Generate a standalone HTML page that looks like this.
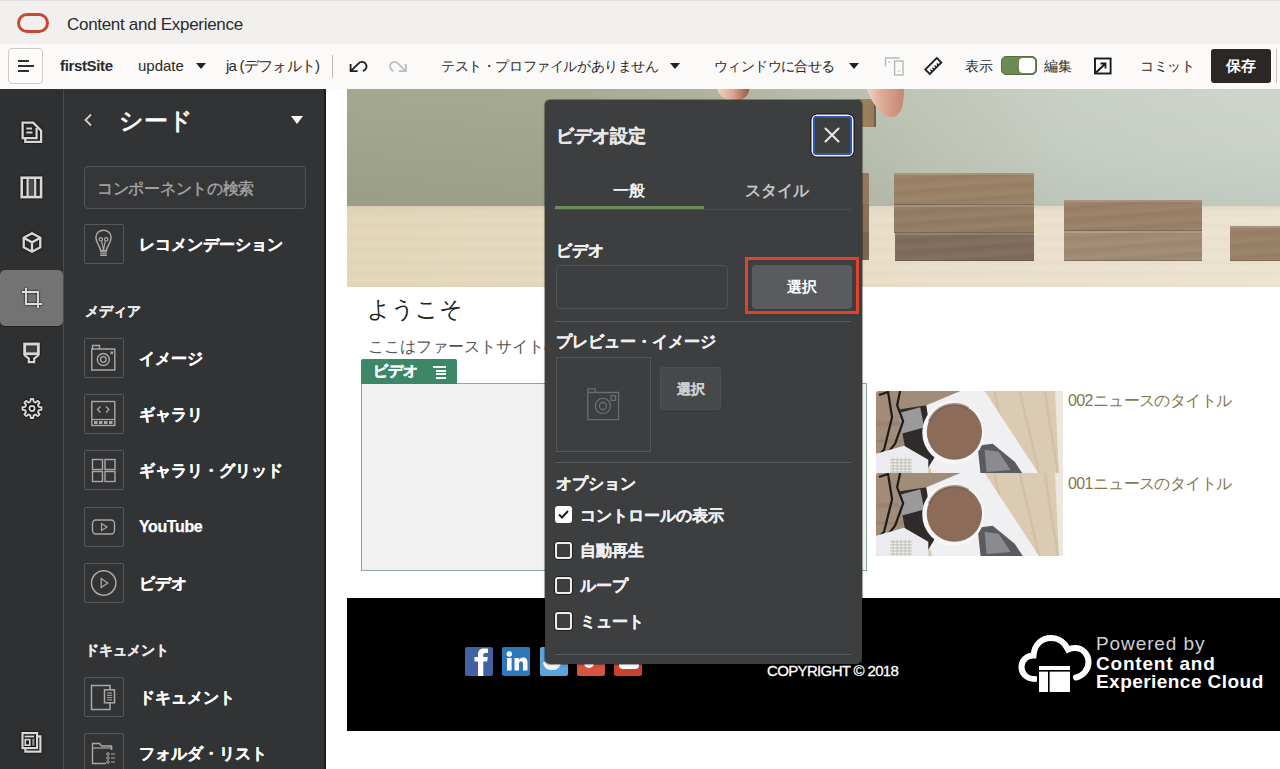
<!DOCTYPE html>
<html><head><meta charset="utf-8">
<style>
*{box-sizing:border-box;margin:0;padding:0}
html,body{width:1280px;height:769px;overflow:hidden;background:#fff}
body{position:relative;font-family:"Liberation Sans",sans-serif;color:#222}
.a{position:absolute}
#topbar{left:0;top:0;width:1280px;height:44px;background:#f1f0ee;border-top:1px solid #e2e1df}
#toolbar{left:0;top:44px;width:1280px;height:45px;background:#fbfaf9}
#rail{left:0;top:89px;width:63px;height:680px;background:#2f3032}
#railsep{left:63px;top:89px;width:1px;height:680px;background:#4a4b4d}
.a.ri{filter:drop-shadow(0 0 0.8px #000)}
#side{left:64px;top:89px;width:262px;height:680px;background:#323335;border-right:2px solid #1c1d1e}
#canvas{left:326px;top:89px;width:954px;height:680px;background:#fff}
.tb{font-size:15px;color:#2a2a2a;white-space:nowrap}
.tri{width:0;height:0;border-left:5px solid transparent;border-right:5px solid transparent;border-top:6px solid #222}
.tile{width:40px;height:40px;border:1px solid #57585a;border-radius:2px}
.tl{font-size:16px;font-weight:bold;color:#fff;white-space:nowrap;-webkit-text-stroke:0.25px #fff}
.sh{font-size:14px;font-weight:bold;color:#e8e8e8;white-space:nowrap;-webkit-text-stroke:0.3px #e8e8e8}
.blk{box-shadow:inset 0 2px 0 rgba(255,255,255,0.14),inset 0 -1px 0 rgba(0,0,0,0.18);background-image:repeating-linear-gradient(176deg,rgba(255,255,255,0) 0px,rgba(255,255,255,0.035) 4px,rgba(0,0,0,0.03) 8px,rgba(255,255,255,0) 12px)}
.news{width:187px;height:83px;line-height:0;border-radius:3px;overflow:hidden;background:#d8c6ad}
.soc{top:647px;width:28px;height:29px;border-radius:2px}
.dlab{font-size:15.6px;font-weight:bold;color:#f0f0f0;white-space:nowrap;-webkit-text-stroke:0.25px #f0f0f0}
.dopt{font-size:15.6px;font-weight:bold;color:#f0f0f0;white-space:nowrap;-webkit-text-stroke:0.25px #f0f0f0}
.cbx{width:17.5px;height:17.5px;border:2px solid #ececec;border-radius:3px;box-shadow:0 0 0 0.7px #151515}
</style></head><body>
<!-- top bar -->
<div id="topbar" class="a"></div>
<div class="a" style="left:17px;top:13px;width:32px;height:20px;border:3.5px solid #c74634;border-radius:10px"></div>
<div class="a" style="left:67px;top:14.5px;font-size:17px;color:#2b2b2b;white-space:nowrap;letter-spacing:-0.3px">Content and Experience</div>

<!-- toolbar -->
<div id="toolbar" class="a"></div>
<div class="a" style="left:8px;top:48px;width:35px;height:36px;border:1px solid #cdcbc8;border-radius:4px;background:#fdfcfb"></div>
<div class="a" style="left:17.5px;top:60px;width:11.5px;height:1.6px;background:#2e2e2e"></div>
<div class="a" style="left:17.5px;top:65px;width:16px;height:1.6px;background:#2e2e2e"></div>
<div class="a" style="left:17.5px;top:70px;width:11.5px;height:1.6px;background:#2e2e2e"></div>
<div class="a tb" style="left:60px;top:57px;font-weight:bold;letter-spacing:-0.35px">firstSite</div>
<div class="a tb" style="left:138px;top:57px">update</div>
<div class="a tri" style="left:196px;top:63px"></div>
<div class="a tb" style="left:226px;top:57px;letter-spacing:-0.75px">ja (デフォルト)</div>
<div class="a" style="left:332px;top:55px;width:1px;height:23px;background:#bdbbb8"></div>

<!-- undo/redo -->
<svg class="a" style="left:348px;top:58px" width="20" height="18" viewBox="0 0 20 18"><path d="M2.6 6 V13.2 H9.6 M3 12.8 L10.6 5.4 A4.5 4.5 0 1 1 14.8 12.8" fill="none" stroke="#1e1e1e" stroke-width="1.8" stroke-linecap="butt" stroke-linejoin="miter"/></svg>
<svg class="a" style="left:388px;top:58px" width="20" height="18" viewBox="0 0 20 18"><g transform="translate(20.5 0) scale(-1 1)"><path d="M2.6 6 V13.2 H9.6 M3 12.8 L10.6 5.4 A4.5 4.5 0 1 1 14.8 12.8" fill="none" stroke="#bcbcbc" stroke-width="1.8"/></g></svg>
<div class="a tb" style="left:441px;top:58px;font-size:14px;letter-spacing:-0.4px">テスト・プロファイルがありません</div>
<div class="a tri" style="left:670px;top:63px"></div>
<div class="a tb" style="left:714px;top:58px;font-size:14px;letter-spacing:-0.6px">ウィンドウに合せる</div>
<div class="a tri" style="left:849px;top:63px"></div>
<!-- device icon -->
<svg class="a" style="left:884px;top:56px" width="22" height="21" viewBox="0 0 22 21"><path d="M1.5 10.5V2h14" fill="none" stroke="#b8b8b8" stroke-width="1.4"/><rect x="10.6" y="5" width="8.4" height="14" fill="none" stroke="#b8b8b8" stroke-width="1.4"/><rect x="4.2" y="5.2" width="1.4" height="1.6" fill="#b8b8b8"/><rect x="13.8" y="14.6" width="1.6" height="1.2" fill="#b8b8b8"/></svg>
<!-- ruler -->
<svg class="a" style="left:923px;top:56px" width="20" height="20" viewBox="0 0 20 20"><g transform="rotate(-45 10.3 10)"><rect x="2.2" y="6.8" width="16.2" height="6.4" fill="none" stroke="#1a1a1a" stroke-width="1.8"/><path d="M5.5 13.2v-2.6 M8.5 13.2v-2.6 M11.5 13.2v-2.6 M14.5 13.2v-2.6" stroke="#1a1a1a" stroke-width="1.3"/></g></svg>
<div class="a tb" style="left:965px;top:58px;font-size:14px">表示</div>
<div class="a" style="left:1001px;top:56px;width:36px;height:19px;border-radius:5px;background:#6b8a56;border:1px solid #52703f"></div>
<div class="a" style="left:1019px;top:58px;width:16px;height:15px;border-radius:4px;background:#fff"></div>
<div class="a tb" style="left:1044px;top:58px;font-size:14px">編集</div>
<!-- external -->
<svg class="a" style="left:1093px;top:57px" width="19" height="18" viewBox="0 0 19 18"><rect x="2" y="1.5" width="15.6" height="15" fill="none" stroke="#1a1a1a" stroke-width="1.9"/><path d="M3 15.5 L12.5 6.5 M7.5 6.5 H12.5 V11.5" fill="none" stroke="#1a1a1a" stroke-width="1.8"/></svg>
<div class="a tb" style="left:1140px;top:58px;font-size:14px;letter-spacing:-0.3px">コミット</div>
<div class="a" style="left:1211px;top:49px;width:60px;height:34px;background:#2a2725;border-radius:3px;color:#fff;font-weight:bold;font-size:15px;text-align:center;line-height:34px">保存</div>
<div class="a" style="left:1276px;top:49px;width:1px;height:34px;background:#c8c6c3"></div>

<!-- rail -->
<div id="rail" class="a"></div>
<div class="a" style="left:0;top:270px;width:63px;height:55.5px;background:#737374;border-radius:5px;box-shadow:0 1px 0 #222"></div>
<div id="railsep" class="a"></div>
<div id="side" class="a"></div>
<div id="canvas" class="a"></div>

<!-- rail icons -->
<svg class="a ri" style="left:21px;top:121px" width="22" height="23" viewBox="0 0 22 23"><path d="M1.6 1.6 H12.2 L20.1 9.6 V20.8 H4.3 V17.2 H1.6 Z" fill="none" stroke="#d8d8d8" stroke-width="2.3" stroke-linejoin="miter"/><path d="M15.6 7 V17.2 H4" fill="none" stroke="#d8d8d8" stroke-width="2.2"/><path d="M5.4 7.6h5.6 M5.4 11.6h6" stroke="#d8d8d8" stroke-width="2"/></svg>
<svg class="a ri" style="left:20px;top:176px" width="23" height="23" viewBox="0 0 23 23"><rect x="8.5" y="2" width="6" height="19" fill="#4a4a4a"/><rect x="1.7" y="1.7" width="19.4" height="19.4" fill="none" stroke="#d8d8d8" stroke-width="2.6"/><path d="M7.6 1.7v19.4 M15.2 1.7v19.4" stroke="#d8d8d8" stroke-width="2.2"/></svg>
<svg class="a ri" style="left:21px;top:231px" width="22" height="23" viewBox="0 0 22 23"><path d="M11 2.2 L19.3 6.8 V16.2 L11 20.8 L2.7 16.2 V6.8 Z M2.7 6.8 L11 11.4 L19.3 6.8 M11 11.4 V20.8" fill="none" stroke="#d6d6d6" stroke-width="2.4" stroke-linejoin="round"/></svg>
<svg class="a ri" style="left:21px;top:287px" width="22" height="22" viewBox="0 0 22 22"><path d="M5 1v16h16 M1 5h16v16" fill="none" stroke="#dedede" stroke-width="1.9"/></svg>
<svg class="a ri" style="left:22px;top:341px" width="20" height="23" viewBox="0 0 20 23"><rect x="2.6" y="3" width="13.8" height="9.8" fill="#3e3e3e" stroke="#d8d8d8" stroke-width="2.8"/><path d="M2.2 14 L6.8 17.6 V21.2 H12.2 V17.6 L16.8 14" fill="none" stroke="#d8d8d8" stroke-width="2.2"/></svg>
<svg class="a" style="left:20.5px;top:397px" width="22" height="23" viewBox="0 0 22 23"><path d="M9.72 1.99 L12.28 1.99 L12.63 4.69 L14.66 5.53 L16.82 3.87 L18.63 5.68 L16.97 7.84 L17.81 9.87 L20.51 10.22 L20.51 12.78 L17.81 13.13 L16.97 15.16 L18.63 17.32 L16.82 19.13 L14.66 17.47 L12.63 18.31 L12.28 21.01 L9.72 21.01 L9.37 18.31 L7.34 17.47 L5.18 19.13 L3.37 17.32 L5.03 15.16 L4.19 13.13 L1.49 12.78 L1.49 10.22 L4.19 9.87 L5.03 7.84 L3.37 5.68 L5.18 3.87 L7.34 5.53 L9.37 4.69Z" fill="none" stroke="#141414" stroke-width="3.6" stroke-linejoin="round"/><path d="M9.72 1.99 L12.28 1.99 L12.63 4.69 L14.66 5.53 L16.82 3.87 L18.63 5.68 L16.97 7.84 L17.81 9.87 L20.51 10.22 L20.51 12.78 L17.81 13.13 L16.97 15.16 L18.63 17.32 L16.82 19.13 L14.66 17.47 L12.63 18.31 L12.28 21.01 L9.72 21.01 L9.37 18.31 L7.34 17.47 L5.18 19.13 L3.37 17.32 L5.03 15.16 L4.19 13.13 L1.49 12.78 L1.49 10.22 L4.19 9.87 L5.03 7.84 L3.37 5.68 L5.18 3.87 L7.34 5.53 L9.37 4.69Z" fill="none" stroke="#d8d8d8" stroke-width="1.9" stroke-linejoin="round"/><circle cx="11" cy="11.5" r="4.6" fill="#161616"/><circle cx="11" cy="11.5" r="2.6" fill="none" stroke="#d8d8d8" stroke-width="1.7"/></svg>
<svg class="a ri" style="left:20px;top:732px" width="23" height="22" viewBox="0 0 23 22"><rect x="2.5" y="1.1" width="14.6" height="15" fill="none" stroke="#d8d8d8" stroke-width="2.2"/><path d="M18 4.3 H20.4 V19.7 H5.4 V17" fill="none" stroke="#d8d8d8" stroke-width="2.2"/><rect x="4.6" y="3.6" width="9.6" height="1.8" fill="#d8d8d8"/><rect x="5.2" y="7.6" width="4.6" height="5.6" fill="none" stroke="#d8d8d8" stroke-width="1.6"/><rect x="12.2" y="6.8" width="2.2" height="7" fill="#d8d8d8" opacity="0.6"/></svg>

<!-- side panel -->
<svg class="a" style="left:83px;top:113px" width="10" height="14" viewBox="0 0 10 14"><path d="M8 1.5 L2.5 7 L8 12.5" fill="none" stroke="#cfcfcf" stroke-width="1.8"/></svg>
<div class="a" style="left:119px;top:105px;font-size:24px;font-weight:bold;color:#fff;white-space:nowrap">シード</div>
<div class="a" style="left:291px;top:116px;width:0;height:0;border-left:6.5px solid transparent;border-right:6.5px solid transparent;border-top:8px solid #fff"></div>
<div class="a" style="left:84px;top:166px;width:222px;height:43px;border:1px solid #545557;border-radius:4px;background:#353638"></div>
<div class="a" style="left:97px;top:179px;font-size:15.7px;color:#a5a5a5;white-space:nowrap;letter-spacing:-0.3px;-webkit-text-stroke:0.4px #a5a5a5">コンポーネントの検索</div>
<div class="a tile" style="left:83.5px;top:224px"></div><svg class="a" style="left:94px;top:224px" width="20" height="40" viewBox="0 0 20 40"><path d="M6.6 26.5 C6.6 22.5 1.9 19 1.9 13.6 C1.9 9 5.3 6.3 9.5 6.3 C13.7 6.3 17.1 9 17.1 13.6 C17.1 19 12.4 22.5 12.4 26.5 Z" fill="none" stroke="#a9a9a9" stroke-width="1.5"/><circle cx="6.8" cy="15.3" r="1.7" fill="none" stroke="#a9a9a9" stroke-width="1.2"/><circle cx="12.2" cy="15.3" r="1.7" fill="none" stroke="#a9a9a9" stroke-width="1.2"/><path d="M7.6 16.8 L9.5 26 M11.4 16.8 L9.5 26" stroke="#a9a9a9" stroke-width="1.2"/><rect x="6.2" y="26.5" width="6.6" height="5.5" fill="#a9a9a9"/><path d="M6.2 28.4h6.6 M6.2 30.2h6.6" stroke="#3a3a3a" stroke-width="0.7"/></svg><div class="a tl" style="left:139px;top:235px">レコメンデーション</div>
<div class="a sh" style="left:85px;top:303px">メディア</div>
<div class="a tile" style="left:83.5px;top:338px"></div><svg class="a" style="left:89px;top:338px" width="30" height="40" viewBox="0 0 30 40"><path d="M3.5 11V7.5h7v3.5 M2.8 11h23v21h-23z" fill="none" stroke="#a8a8a8" stroke-width="1.4"/><circle cx="14.3" cy="21.5" r="6" fill="none" stroke="#a8a8a8" stroke-width="1.4"/><circle cx="14.3" cy="21.5" r="2.8" fill="none" stroke="#a8a8a8" stroke-width="1.3"/><rect x="21.5" y="13.5" width="2.6" height="2.6" fill="#a8a8a8"/></svg><div class="a tl" style="left:139px;top:349px">イメージ</div>
<div class="a tile" style="left:83.5px;top:394px"></div><svg class="a" style="left:89px;top:394px" width="30" height="40" viewBox="0 0 30 40"><rect x="2.8" y="7.5" width="23" height="24" fill="none" stroke="#a8a8a8" stroke-width="1.4"/><path d="M2.8 25.5h23" stroke="#a8a8a8" stroke-width="1.2"/><path d="M11.5 12.5 L8.5 15.5 L11.5 18.5 M17 12.5 L20 15.5 L17 18.5" fill="none" stroke="#a8a8a8" stroke-width="1.3"/><path d="M5 28.5h3.5 M10 28.5h3.5 M15 28.5h3.5 M20 28.5h3.5" stroke="#a8a8a8" stroke-width="3"/></svg><div class="a tl" style="left:139px;top:405px">ギャラリ</div>
<div class="a tile" style="left:83.5px;top:450px"></div><svg class="a" style="left:89px;top:450px" width="30" height="40" viewBox="0 0 30 40"><rect x="3.5" y="9.5" width="10" height="10" fill="none" stroke="#a8a8a8" stroke-width="1.4"/><rect x="16" y="9.5" width="10" height="10" fill="none" stroke="#a8a8a8" stroke-width="1.4"/><rect x="3.5" y="21.5" width="10" height="10" fill="none" stroke="#a8a8a8" stroke-width="1.4"/><rect x="16" y="21.5" width="10" height="10" fill="none" stroke="#a8a8a8" stroke-width="1.4"/></svg><div class="a tl" style="left:139px;top:461px">ギャラリ・グリッド</div>
<div class="a tile" style="left:83.5px;top:507px"></div><svg class="a" style="left:89px;top:507px" width="30" height="40" viewBox="0 0 30 40"><rect x="3.5" y="13" width="22" height="14" rx="3.5" fill="none" stroke="#a8a8a8" stroke-width="1.4"/><path d="M12.5 16.5 L18 20 L12.5 23.5 Z" fill="none" stroke="#a8a8a8" stroke-width="1.2"/></svg><div class="a tl" style="left:139px;top:518px;letter-spacing:-0.4px">YouTube</div>
<div class="a tile" style="left:83.5px;top:563px"></div><svg class="a" style="left:89px;top:563px" width="30" height="40" viewBox="0 0 30 40"><circle cx="14.7" cy="20" r="12.2" fill="none" stroke="#a8a8a8" stroke-width="1.5"/><path d="M12.2 15.5 L18.7 20 L12.2 24.5 Z" fill="none" stroke="#a8a8a8" stroke-width="1.3"/></svg><div class="a tl" style="left:139px;top:574px">ビデオ</div>
<div class="a sh" style="left:85px;top:642px">ドキュメント</div>
<div class="a tile" style="left:83.5px;top:677px"></div><svg class="a" style="left:89px;top:677px" width="30" height="40" viewBox="0 0 30 40"><path d="M21 12.5V8.5h-18.5v24h18.5v-6.5" fill="none" stroke="#a8a8a8" stroke-width="1.5"/><rect x="15.5" y="12.8" width="10" height="13" fill="none" stroke="#a8a8a8" stroke-width="1.5"/><path d="M18 16h5 M18 18.3h5 M18 20.6h5 M18 22.9h5" stroke="#a8a8a8" stroke-width="1"/></svg><div class="a tl" style="left:139px;top:688px">ドキュメント</div>
<div class="a tile" style="left:83.5px;top:733px"></div><svg class="a" style="left:89px;top:733px" width="30" height="40" viewBox="0 0 30 40"><path d="M17 30.5h-13.5v-20h7l2 2.5h10v4" fill="none" stroke="#a8a8a8" stroke-width="1.4"/><path d="M3.5 15h20" stroke="#a8a8a8" stroke-width="1.2"/><circle cx="19" cy="21" r="1.3" fill="none" stroke="#a8a8a8" stroke-width="1"/><circle cx="19" cy="25" r="1.3" fill="none" stroke="#a8a8a8" stroke-width="1"/><circle cx="19" cy="29" r="1.3" fill="none" stroke="#a8a8a8" stroke-width="1"/><path d="M22 21h4 M22 25h4 M22 29h4" stroke="#a8a8a8" stroke-width="1.2"/></svg><div class="a tl" style="left:139px;top:744px">フォルダ・リスト</div>

<!-- banner -->
<div class="a" style="left:347px;top:89px;width:933px;height:198px;overflow:hidden">
  <div class="a" style="left:0;top:0;width:933px;height:118px;background:linear-gradient(90deg,#a0a38b 0%,#a2a58d 25%,#aaae99 38%,#bac0b1 58%,#c6cdc2 78%,#cbd2c9 100%)"></div>
  <div class="a" style="left:0;top:0;width:933px;height:118px;background:linear-gradient(180deg,rgba(255,255,255,0.06) 0%,rgba(255,255,255,0) 50%,rgba(80,90,70,0.07) 100%)"></div>
  <div class="a" style="left:0;top:117px;width:933px;height:81px;background:linear-gradient(90deg,#e2d6b9 0%,#e5dac1 35%,#e9dfcb 65%,#ece3d1 100%)"></div>
  <div class="a" style="left:0;top:117px;width:933px;height:81px;background:repeating-linear-gradient(180deg,rgba(255,255,255,0) 0px,rgba(255,255,255,0.06) 2px,rgba(255,255,255,0) 5px,rgba(160,130,70,0.03) 8px,rgba(255,255,255,0) 12px)"></div>
  <div class="a" style="left:0;top:117px;width:933px;height:6px;background:linear-gradient(180deg,rgba(120,110,80,0.10),rgba(120,110,80,0))"></div>
  <!-- finger left -->
  <div class="a" style="left:370px;top:-14px;width:32px;height:26px;border-radius:0 0 45% 55%;background:linear-gradient(90deg,#f0d2c4 0%,#dca593 50%,#9a5840 100%)"></div>
  <!-- held block + finger right -->
  <div class="a" style="left:510px;top:10px;width:19px;height:28px;background:linear-gradient(90deg,#a2865f,#94795a);box-shadow:inset -2px 0 0 rgba(60,40,20,0.35)"></div>
<svg class="a" style="left:518px;top:0" width="42" height="32" viewBox="0 0 42 32"><defs><linearGradient id="fg" x1="0" x2="1" y1="0" y2="0"><stop offset="0" stop-color="#f2d4c6"/><stop offset="0.35" stop-color="#dfae9c"/><stop offset="1" stop-color="#c58670"/></linearGradient></defs><path d="M2 0 C5 9 11 21 20 26.5 C27 30.5 34 27 36.5 20 C38.5 14 38.8 6 39 0 Z" fill="url(#fg)"/></svg>
  <!-- stack 1 -->
  <div class="a" style="left:505px;top:84px;width:17px;height:87px;background:linear-gradient(180deg,#94785e 0 36%,#8a7058 36% 68%,#7a6654 68%)"></div>
  <!-- stack 2 -->
  <div class="a blk" style="left:547px;top:84px;width:140px;height:32px;background-color:#9a8167"></div>
  <div class="a blk" style="left:547px;top:116px;width:140px;height:28px;background-color:#947c64"></div>
  <div class="a blk" style="left:548px;top:144px;width:139px;height:28px;background-color:#7f6c5a"></div>
  <!-- stack 3 -->
  <div class="a blk" style="left:717px;top:111px;width:138px;height:31px;background-color:#9a8068"></div>
  <div class="a blk" style="left:717px;top:142px;width:138px;height:30px;background-color:#a08a74"></div>
  <!-- stack 4 -->
  <div class="a blk" style="left:883px;top:137px;width:60px;height:35px;background-color:#998068"></div>
</div>
<!-- welcome -->
<div class="a" style="left:367px;top:294px;font-size:23px;color:#222;white-space:nowrap">ようこそ</div>
<div class="a" style="left:368px;top:337px;font-size:16px;color:#555;white-space:nowrap">ここはファーストサイトのホームページです。</div>

<!-- video component -->
<div class="a" style="left:361px;top:383px;width:506px;height:188px;background:#f1f1f1;border:1px solid #8ba597"></div>
<div class="a" style="left:361px;top:359px;width:96px;height:25px;background:#3b8768;border-radius:2px 2px 0 0"></div>
<div class="a" style="left:373px;top:362px;font-size:14.5px;font-weight:bold;color:#fff;white-space:nowrap;-webkit-text-stroke:0.45px #fff">ビデオ</div>
<div class="a" style="left:433px;top:366px;width:13px;height:2px;background:#fff"></div>
<div class="a" style="left:436px;top:369.5px;width:10px;height:2px;background:#fff"></div>
<div class="a" style="left:436px;top:373px;width:10px;height:2px;background:#fff"></div>
<div class="a" style="left:436px;top:376.5px;width:10px;height:2px;background:#fff"></div>

<!-- news -->
<div class="a news" style="left:876px;top:391px"><svg width="187" height="83" viewBox="0 0 186 82" preserveAspectRatio="none"><rect width="186" height="82" fill="#dccbb3"/><path d="M0 0H92L44 82H0Z" fill="#a08c78"/><path d="M0 30H60V34H0Z M0 48H50V51H0Z" fill="#8f7b68" opacity="0.5"/><path d="M118 0 C123 30 133 60 138 82 M143 0 C149 28 158 60 162 82 M168 0 C172 30 177 55 181 82" stroke="#cdb99f" stroke-width="2.5" fill="none" opacity="0.6"/><path d="M178 0H186V82H182Z" fill="#ece7df"/><path d="M84 0H108L162 82H56L36 20Z" fill="#f0f0f2"/><path d="M24 18L50 14L54 40L58 66L48 82L36 82L30 62L26 40Z" fill="#2e2b2a"/><path d="M22 22L44 16L48 36L26 42Z" fill="#9a9a9c"/><path d="M3 4L12 1L16 26L8 58L3 63 M24 0L21 14L27 30L19 52L11 62" stroke="#1e1c1b" stroke-width="2.2" fill="none"/><path d="M0 62L28 54L52 68L52 82H0Z" fill="#ececf0"/><path d="M14 68h22M14 71h22M14 74h22M14 77h22M14 80h22 M17 66v16 M21 66v16 M25 66v16 M29 66v16 M33 66v16" stroke="#b9b4a6" stroke-width="1" opacity="0.8"/><path d="M101 54L116 52L138 70L146 82H104Z" fill="#5a5b5e"/><path d="M108 58L122 60L134 78L110 80Z" fill="#8a8b8e"/><circle cx="77" cy="41" r="31" fill="#f7f7f7"/><circle cx="78" cy="40.5" r="27.5" fill="#8c6c58"/><path d="M53 30 A27 27 0 0 1 92 17" stroke="#6c5040" stroke-width="3" fill="none" opacity="0.5"/></svg></div>
<div class="a news" style="left:876px;top:473px"><svg width="187" height="83" viewBox="0 0 186 82" preserveAspectRatio="none"><rect width="186" height="82" fill="#dccbb3"/><path d="M0 0H92L44 82H0Z" fill="#a08c78"/><path d="M0 30H60V34H0Z M0 48H50V51H0Z" fill="#8f7b68" opacity="0.5"/><path d="M118 0 C123 30 133 60 138 82 M143 0 C149 28 158 60 162 82 M168 0 C172 30 177 55 181 82" stroke="#cdb99f" stroke-width="2.5" fill="none" opacity="0.6"/><path d="M178 0H186V82H182Z" fill="#ece7df"/><path d="M84 0H108L162 82H56L36 20Z" fill="#f0f0f2"/><path d="M24 18L50 14L54 40L58 66L48 82L36 82L30 62L26 40Z" fill="#2e2b2a"/><path d="M22 22L44 16L48 36L26 42Z" fill="#9a9a9c"/><path d="M3 4L12 1L16 26L8 58L3 63 M24 0L21 14L27 30L19 52L11 62" stroke="#1e1c1b" stroke-width="2.2" fill="none"/><path d="M0 62L28 54L52 68L52 82H0Z" fill="#ececf0"/><path d="M14 68h22M14 71h22M14 74h22M14 77h22M14 80h22 M17 66v16 M21 66v16 M25 66v16 M29 66v16 M33 66v16" stroke="#b9b4a6" stroke-width="1" opacity="0.8"/><path d="M101 54L116 52L138 70L146 82H104Z" fill="#5a5b5e"/><path d="M108 58L122 60L134 78L110 80Z" fill="#8a8b8e"/><circle cx="77" cy="41" r="31" fill="#f7f7f7"/><circle cx="78" cy="40.5" r="27.5" fill="#8c6c58"/><path d="M53 30 A27 27 0 0 1 92 17" stroke="#6c5040" stroke-width="3" fill="none" opacity="0.5"/></svg></div>
<div class="a" style="left:1068px;top:391px;font-size:16px;color:#857849;white-space:nowrap;letter-spacing:-0.6px">002ニュースのタイトル</div>
<div class="a" style="left:1068px;top:474px;font-size:16px;color:#857849;white-space:nowrap;letter-spacing:-0.6px">001ニュースのタイトル</div>

<!-- footer -->
<div class="a" style="left:347px;top:598px;width:933px;height:133px;background:#000"></div>
<div class="a soc" style="left:465px;background:#4262a3"></div>
<div class="a soc" style="left:502px;background:#2c78bb"></div>
<div class="a soc" style="left:540px;background:#5ba4dc"></div>
<div class="a soc" style="left:577px;background:#d65540"></div>
<div class="a soc" style="left:614px;background:#c8432f"></div>
<svg class="a" style="left:465px;top:647px" width="28" height="29" viewBox="0 0 28 29"><path d="M13 29 V14.5 H9.5 V10 H13 V7.5 C13 3.5 15 1.5 19 1.5 C20.5 1.5 22 1.7 23 1.8 V6 H20.5 C18.8 6 18.3 6.8 18.3 8.3 V10 H22.8 L22.2 14.5 H18.3 V29 Z" fill="#fff"/></svg>
<svg class="a" style="left:502px;top:647px" width="28" height="29" viewBox="0 0 28 29"><rect x="5" y="11" width="4.6" height="12.5" fill="#fff"/><circle cx="7.3" cy="7" r="2.7" fill="#fff"/><path d="M12.5 11 H16.8 V13 C17.6 11.6 19.2 10.6 21.2 10.6 C24.3 10.6 25.5 12.6 25.5 16 V23.5 H21 V16.8 C21 15.2 20.5 14.3 19.1 14.3 C17.6 14.3 17 15.4 17 16.9 V23.5 H12.5 Z" fill="#fff"/></svg>
<div class="a" style="left:767px;top:662px;font-size:15px;color:#fff;white-space:nowrap;letter-spacing:-0.65px;-webkit-text-stroke:0.3px #fff;text-shadow:0 0 1px #000">COPYRIGHT © 2018</div>
<svg class="a" style="left:1016px;top:632px" width="78" height="64" viewBox="0 0 78 64"><path d="M19 47 C10 47 5.5 41 5.5 35 C5.5 28 11 23.5 17.5 23.5 C18.5 12 26 6 35 6 C43 6 49 11 52 17.5 C54 16.5 57 16 59 16 C67 16 72.5 22.5 72.5 30 C72.5 38 67 44 60 45.5" fill="none" stroke="#fff" stroke-width="6" stroke-linecap="round"/><rect x="22" y="33" width="33" height="28" fill="#fff" stroke="#000" stroke-width="2"/><rect x="23" y="38" width="31" height="1.6" fill="#000"/><rect x="32" y="39" width="1.6" height="22" fill="#000"/></svg>
<div class="a" style="left:1096px;top:634px;font-size:19px;color:#cfcfcf;white-space:nowrap;line-height:20px;letter-spacing:0.9px">Powered by</div>
<div class="a" style="left:1096px;top:654px;font-size:19px;font-weight:bold;color:#fff;white-space:nowrap;line-height:20px;letter-spacing:0.8px">Content and</div>
<div class="a" style="left:1096px;top:672px;font-size:19px;font-weight:bold;color:#fff;white-space:nowrap;line-height:20px;letter-spacing:0.45px">Experience Cloud</div>

<div class="a" style="left:543px;top:662px;width:18px;height:8px;border-radius:0 0 10px 10px;background:#fff;opacity:0.9"></div><div class="a" style="left:584px;top:661px;width:10px;height:7px;border-radius:0 0 5px 5px;background:#fff"></div><div class="a" style="left:619px;top:660px;width:20px;height:9px;border-radius:0 0 4px 4px;background:#fff"></div>
<!-- dialog -->
<div class="a" style="left:545px;top:100px;width:317px;height:564px;background:#3d3e40;border-radius:5px;box-shadow:0 0 0 1px rgba(0,0,0,0.3),0 1px 3px rgba(0,0,0,0.15)"></div>
<div class="a" style="left:556px;top:124px;font-size:18px;font-weight:bold;color:#e6e6e6;white-space:nowrap;-webkit-text-stroke:0.35px #e6e6e6">ビデオ設定</div>
<div class="a" style="left:813px;top:115.5px;width:39px;height:39px;border:2.5px solid #2c56b8;border-radius:4px;box-shadow:0 0 0 1.5px #f4f4ff,0 0 0 2.5px #111"></div>
<svg class="a" style="left:824px;top:127px" width="16" height="16" viewBox="0 0 16 16"><path d="M1.5 1.5 L14.5 14.5 M14.5 1.5 L1.5 14.5" stroke="#e6e6e6" stroke-width="2.1" stroke-linecap="round"/></svg>
<div class="a" style="left:613px;top:181px;font-size:16px;font-weight:bold;color:#f2f2f2;white-space:nowrap">一般</div>
<div class="a" style="left:745px;top:181px;font-size:16px;font-weight:bold;color:#c4c4c4;white-space:nowrap">スタイル</div>
<div class="a" style="left:555px;top:209px;width:296px;height:1px;background:#4d4e50"></div>
<div class="a" style="left:555px;top:206px;width:149px;height:3px;background:#6c8b59"></div>

<div class="a dlab" style="left:556px;top:241px">ビデオ</div>
<div class="a" style="left:556px;top:265px;width:172px;height:44px;border:1px solid #525355;border-radius:4px"></div>
<div class="a" style="left:745px;top:257px;width:113.5px;height:57px;border:3.8px solid #e4402a"></div>
<div class="a" style="left:752px;top:265px;width:99.5px;height:43.5px;background:#5a5b5e;border-radius:4px;color:#fff;font-size:15px;font-weight:bold;text-align:center;line-height:44px">選択</div>
<div class="a" style="left:555px;top:321px;width:296px;height:1px;background:#5a5b5d"></div>

<div class="a dlab" style="left:556px;top:332px">プレビュー・イメージ</div>
<div class="a" style="left:556px;top:356.5px;width:95px;height:95px;border:1px solid #545557"></div>
<svg class="a" style="left:585px;top:386px" width="36" height="36" viewBox="0 0 36 36"><path d="M2.8 6.5V2.8h7.4v3.7 M2.8 6.5h30.8v27.2h-30.8z" fill="none" stroke="#6c6d6f" stroke-width="1.3"/><circle cx="17.9" cy="20" r="7.6" fill="none" stroke="#6c6d6f" stroke-width="1.3"/><circle cx="17.9" cy="20" r="3.5" fill="none" stroke="#6c6d6f" stroke-width="1.3"/><rect x="26" y="9.7" width="4.6" height="4.6" fill="none" stroke="#6c6d6f" stroke-width="1.2"/></svg>
<div class="a" style="left:660px;top:367px;width:61px;height:43px;background:#474849;border:1px solid #4f5052;border-radius:3px;color:#cdcdcd;font-size:14px;font-weight:bold;text-align:center;line-height:42px;-webkit-text-stroke:0.3px #cdcdcd">選択</div>
<div class="a" style="left:555px;top:462px;width:296px;height:1px;background:#58595b"></div>

<div class="a dlab" style="left:556px;top:474px">オプション</div>
<div class="a" style="left:554.5px;top:505.5px;width:17.5px;height:17.5px;background:#fff;border-radius:3px"></div>
<svg class="a" style="left:554.5px;top:505.5px" width="17" height="17" viewBox="0 0 17 17"><path d="M4 8.5 L7 11.5 L13 5" fill="none" stroke="#222" stroke-width="2"/></svg>
<div class="a dopt" style="left:579.5px;top:506px">コントロールの表示</div>
<div class="a cbx" style="left:554.5px;top:541.5px"></div>
<div class="a dopt" style="left:579.5px;top:541px">自動再生</div>
<div class="a cbx" style="left:554.5px;top:576.5px"></div>
<div class="a dopt" style="left:579.5px;top:576px">ループ</div>
<div class="a cbx" style="left:554.5px;top:612px"></div>
<div class="a dopt" style="left:579.5px;top:611.5px">ミュート</div>
<div class="a" style="left:555px;top:654px;width:296px;height:1px;background:#58595b"></div>
</body></html>
